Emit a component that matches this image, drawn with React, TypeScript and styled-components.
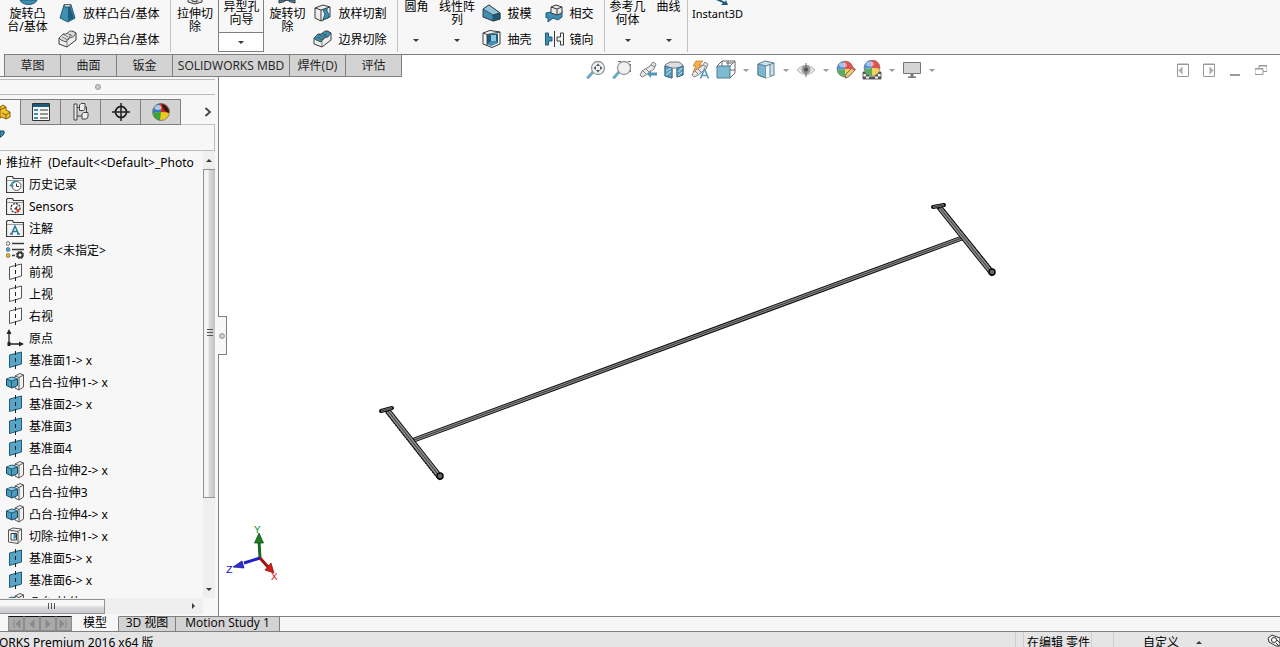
import React from "react";
import styled, { createGlobalStyle, css } from "styled-components";

const ink = "#3a3a3a";
const edge = "#808080";
const blue = "#3f8fb3";
const deep = "#1d5c7c";
const pale = "#8cc6de";

const GlobalStyle = createGlobalStyle`
  * { box-sizing: border-box; }
  body { margin: 0; }
  button, input {
    font: inherit; color: inherit; background: none; border: 0;
    padding: 0; margin: 0; border-radius: 0;
  }
  button { cursor: default; }
  svg { display: block; flex: none; }
`;

const Shell = styled.div`
  display: flex;
  flex-direction: column;
  height: 100vh;
  overflow: hidden;
  background: #f7f7f7;
  color: #000;
  font: 12px/13px "Noto Sans", "Noto Sans CJK SC", sans-serif;
  white-space: nowrap;
`;

/* ---------- Ribbon ---------- */

const Ribbon = styled.div`
  display: flex;
  flex: none;
  height: 54px;
  overflow: hidden;
`;

const Group = styled.div`
  display: flex;
  height: 52px;
  border-right: 1px solid #c3c3c3;
  &:last-child { border-right: 0; }
`;

const BigButton = styled.button<{ $width: number; $small?: boolean }>`
  display: flex;
  flex-direction: column;
  align-items: center;
  width: ${(p) => p.$width}px;
  height: 52px;
  font-size: ${(p) => (p.$small ? 11 : 12)}px;
`;

const BigCaret = styled.span`
  margin-top: auto;
  padding-bottom: 10px;
`;

const SplitButton = styled.div`
  display: flex;
  flex-direction: column;
  width: 46px;
  height: 52px;
  border: 1px solid ${edge};
  border-top: 0;
`;

const SplitLabel = styled.button`
  height: 33px;
  padding-bottom: 7px;
  line-height: 13px;
  border-bottom: 1px solid ${edge};
`;

const SplitDrop = styled.button`
  display: grid;
  place-items: center;
  flex: 1;
  background: #fff;
`;

const SmallColumn = styled.div<{ $end: number }>`
  display: flex;
  flex-direction: column;
  padding: 0 ${(p) => p.$end}px 0 3px;
`;

const SmallButton = styled.button`
  display: flex;
  align-items: center;
  gap: 6px;
  height: 26px;
`;

const Caret = ({ color = ink, up = false }: { color?: string; up?: boolean }) => (
  <svg width="6" height="3" viewBox="0 0 6 3">
    <path d={up ? "M0 3L3 0L6 3Z" : "M0 0H6L3 3Z"} fill={color} />
  </svg>
);

interface BigProps {
  lines: string[];
  width: number;
  icon?: React.ReactNode;
  caret?: boolean;
  small?: boolean;
}

function Big({ lines, width, icon, caret, small }: BigProps) {
  return (
    <BigButton $width={width} $small={small}>
      {icon}
      {lines.map((l) => <span key={l}>{l}</span>)}
      {caret && <BigCaret><Caret /></BigCaret>}
    </BigButton>
  );
}

const TopIcon = ({ kind }: { kind: "revolve" | "extrude" | "cut" | "instant" }) => (
  <svg width="24" height="7" viewBox="0 0 24 7">
    {kind === "revolve" && <path d="M4 0C6 6 19 6 21 0Z" fill={blue} stroke={deep} />}
    {kind === "extrude" && <path d="M5 0V2L12 4L19 2V0M9 0V1L14 2V0" fill="#ddd" stroke={ink} />}
    {kind === "cut" && <path d="M4 0V3L8 2L12 0L16 2L20 3V0Z" fill={blue} stroke={ink} />}
    {kind === "instant" && <path d="M10 0L15 0L19 2L20 0L22 5L15 5L17 3Z" fill={deep} />}
  </svg>
);

const Loft = () => (
  <svg width="19" height="20" viewBox="0 0 19 20">
    <path d="M6 2H13L17 15L10 19L2 15Z" fill={blue} stroke={deep} />
    <path d="M10 4L12 4L16 15L10 18Z" fill={deep} />
    <path d="M6 1.500H13L12 4H7Z" fill="#b9dcea" stroke={ink} strokeWidth=".7" />
  </svg>
);
const Boundary = ({ fill }: { fill: string }) => (
  <svg width="19" height="20" viewBox="0 0 19 20">
    <path d="M1 9L3 8L6 9L8 7L12 5L14 2L18 4V11L9 18L1 15Z" fill="#eee" stroke={ink} />
    <path d="M1 9L5 5L8 5L12 2L14 2L18 4L15 8L11 9L8 13L3 11Z" fill={fill} stroke={ink} strokeWidth=".8" />
    <path d="M9 18V12M5 5L10 8M9 4L14 7M4 8L10 11L13 5" fill="none" stroke={ink} strokeWidth=".6" />
  </svg>
);
const LoftCut = () => (
  <svg width="19" height="20" viewBox="0 0 19 20">
    <path d="M2 5L10 2L17 4V14L8 18L2 15Z" fill="#eee" stroke={ink} />
    <path d="M2 5L8 7V18M8 7L17 4" fill="none" stroke={ink} />
    <path d="M10 7L14 5V8L16 12V14L10 17L12 11Z" fill={blue} stroke={deep} />
  </svg>
);
const Draft = () => (
  <svg width="19" height="20" viewBox="0 0 19 20">
    <path d="M1 6L7 2L18 10V16L11 18L1 14Z" fill={blue} stroke={ink} />
    <path d="M1 6L7 2L18 10L11 12Z" fill={pale} stroke={ink} strokeWidth=".8" />
    <path d="M11 12V18L18 16V10Z" fill={deep} stroke={ink} strokeWidth=".7" />
  </svg>
);
const ShellIcon = () => (
  <svg width="19" height="20" viewBox="0 0 19 20">
    <path d="M1 4L8 1.500L18 3V15L10 18.500L1 15Z" fill="#f4f4f4" stroke={ink} />
    <path d="M5 5.500L16 4.500V14L9 16.500L5 15Z" fill={deep} />
    <path d="M9 6H14V12H9Z" fill={pale} />
    <path d="M5 15L9 12H15V14.500L9 17Z" fill={blue} />
    <path d="M1 4L5 5.500V16.500M5 5.500L18 3" fill="none" stroke={ink} strokeWidth=".9" />
  </svg>
);
const Intersect = () => (
  <svg width="19" height="20" viewBox="0 0 19 20">
    <path d="M1 10L6 9L13 11L17 8V14L13 17L8 15L3 19V14L1 15Z" fill={blue} stroke={deep} />
    <path d="M6 4L11 2L17 4V10L12 12L6 10Z" fill="#e8e8e8" stroke={ink} />
    <path d="M6 4L12 6L17 4M12 6V12" fill="none" stroke={ink} />
  </svg>
);
const Mirror = () => (
  <svg width="19" height="20" viewBox="0 0 19 20">
    <path d="M.5 4H3.500V8H7V12H3.500V16H.5Z" fill={blue} stroke={deep} />
    <path d="M9.500 2V18" stroke={ink} />
    <path d="M18.500 4H15.500V8H12V12H15.500V16H18.500Z" fill="#f4f4f4" stroke={ink} />
  </svg>
);

/* ---------- Command tabs and view toolbar ---------- */

const TabRow = styled.div`
  display: flex;
  flex: none;
  height: 23px;
  position: relative;
  z-index: 1;
`;

const CommandTabs = styled.div`
  display: flex;
  padding-left: 4px;
  border-bottom: 1px solid ${edge};
  font-family: "Open Sans", "Noto Sans CJK SC", sans-serif;
`;

const CommandTab = styled.button<{ $wide?: boolean }>`
  width: ${(p) => (p.$wide ? 117 : 56)}px;
  border: 1px solid ${edge};
  border-width: 1px 0 0 1px;
  background: #d3d3d3;
  color: #222;
  &:last-child { width: 57px; border-right-width: 1px; }
`;

const ViewBar = styled.div`
  display: flex;
  flex: 1;
  justify-content: space-between;
  padding: 0 6px 0 181px;
  border-top: 1px solid ${edge};
  background: #fff;
`;

const Tools = styled.div`
  display: flex;
`;

const Tool = styled.button<{ $narrow?: boolean }>`
  display: grid;
  place-items: center;
  width: ${(p) => (p.$narrow ? 14 : 26)}px;
  height: 30px;
`;

type HudKind = "fit" | "area" | "prev" | "section" | "anno" | "orient" | "style" | "eye" | "appear" | "scene" | "screen";

const Scope = () => (
  <>
    <path d="M2 15L4 11L12 6L15 2L18 4L16 9L8 15L4 17Z" fill="#e8e8e8" stroke="#808080" />
    <path d="M5 11L8 14M8 9L11 12M13 5L17 7" stroke="#808080" fill="none" />
  </>
);
const Ball = ({ cx, cy }: { cx: number; cy: number }) => (
  <g transform={`translate(${cx} ${cy})`}>
    <path d="M0 0L-8 1A8 8 0 0 1 -1 -8Z" fill="#5690d8" />
    <path d="M0 0L-1 -8A8 8 0 0 1 8 1Z" fill="#e05252" />
    <path d="M0 0L8 1A8 8 0 0 1 0 8Z" fill="#efd257" />
    <path d="M0 0L0 8A8 8 0 0 1 -8 1Z" fill="#58ae5c" />
    <circle r="8" fill="none" stroke="#777" strokeWidth=".6" />
    <ellipse cx="-2" cy="-4" rx="4" ry="2.500" fill="#fff" opacity=".45" />
  </g>
);

function HudIcon({ kind }: { kind: HudKind }) {
  return (
    <svg width="20" height="20" viewBox="0 0 20 20">
      {(kind === "fit" || kind === "area") && (
        <>
          {kind === "area" && <path d="M6 1.500H18.500V13" fill="none" stroke="#666" strokeDasharray="3 2" />}
          <path d="M7 12L2 17.500" stroke="#6fa8c2" strokeWidth="3" strokeLinecap="round" />
          <circle cx="12" cy="8" r="6.500" fill="#eef2f4" stroke="#999" strokeWidth="1.300" />
          {kind === "fit" && <path d="M12 3.500L14 6H10ZM12 12.500L14 10H10ZM7.500 8L10 6V10ZM16.500 8L14 6V10Z" fill="#555" />}
        </>
      )}
      {kind === "prev" && (
        <>
          <Scope />
          <path d="M9 14L13 10V12.500H19V15.500H13V18Z" fill="#5495b5" />
        </>
      )}
      {kind === "section" && (
        <>
          <path d="M1 5L6 2H15L19 5V15L13 17V8H8V18L1 16Z" fill="#ddd" stroke="#777" />
          <path d="M1 6L8 8V18L1 16ZM13 8L19 6V15L13 17Z" fill="#5c9fbe" stroke="#39708b" />
          <path d="M2 11L7 8M2 15L7 11M14 12L18 8M14 16L18 12" stroke="#c5e2ee" />
        </>
      )}
      {kind === "anno" && (
        <>
          <Scope />
          <path d="M6 1H13L9 5H12L3 12L6 6H3Z" fill="#f3b54a" stroke="#c87a3a" strokeWidth=".8" />
          <path d="M10.500 18.500L14.500 9L18.500 18.500M12 15.500H17" fill="none" stroke="#5c9ab8" strokeWidth="1.600" />
        </>
      )}
      {kind === "orient" && (
        <>
          <path d="M1 6L6 1H19V13L14 18M6 1V6M12 1V6M14 6L19 1M14 10H19M10 3H17" fill="none" stroke="#666" />
          <path d="M1 6H14V18H1Z" fill="#7fb9d2" stroke="#4c7f98" />
        </>
      )}
      {kind === "style" && (
        <>
          <path d="M2 4L9 1L18 3V15L10 18L2 15Z" fill="#c8e3ee" stroke="#5e7f8e" />
          <path d="M2 4L10 6V18L2 15Z" fill="#7db6cf" stroke="#5e7f8e" />
          <path d="M10 6L14 5V17L10 18Z" fill="#f0f7fa" />
          <path d="M10 6L18 3M14 4.500V16.500" stroke="#5e7f8e" />
        </>
      )}
      {kind === "eye" && (
        <>
          <path d="M1 10C6 4 14 4 19 10C14 16 6 16 1 10Z" fill="#e4e4e4" stroke="#b5b5b5" />
          <circle cx="10" cy="9.500" r="4.500" fill="#999" />
          <circle cx="10" cy="9.500" r="2" fill="#444" />
          <path d="M10 3V17" stroke="#666" />
        </>
      )}
      {kind === "appear" && (
        <>
          <Ball cx={9} cy={9} />
          <path d="M9 18L10 14L17 7L19.500 9.500L12.500 17Z" fill="#f0c96a" stroke="#555" strokeWidth=".8" />
          <path d="M15.500 8.500L17 7L19.500 9.500L18 11Z" fill="#d86a5c" />
        </>
      )}
      {kind === "scene" && (
        <>
          <path d="M1 12H19V19H1Z" fill="#eee" stroke="#666" />
          <path d="M1 12H4V14H1ZM16 12H19V14H16ZM4 14H7V16.500H4ZM13 14H16V16.500H13ZM1 16.500H4V19H1ZM7 16.500H10V19H7ZM13 16.500H10V19H13ZM16 16.500H19V19H16Z" fill="#555" />
          <Ball cx={10} cy={8} />
        </>
      )}
      {kind === "screen" && (
        <>
          <path d="M1.500 2.500H18.500V13.500H1.500Z" fill="#d4d4d4" stroke="#777" />
          <path d="M8.500 14V16.500H6V18H14V16.500H11.500V14Z" fill="#777" />
        </>
      )}
    </svg>
  );
}

const hud: [HudKind, string, boolean?][] = [
  ["fit", "整屏显示全图"], ["area", "局部放大"], ["prev", "上一视图"], ["section", "剖面视图"],
  ["anno", "动态注解视图"], ["orient", "视图定向", true], ["style", "显示样式", true], ["eye", "隐藏/显示项目", true],
  ["appear", "编辑外观"], ["scene", "应用布景", true], ["screen", "视图设定", true],
];

const windowGlyphs: [string, string][] = [
  ["左侧窗格", "M.5 1H11.500V13.500H.5ZM.5 1.500H11.500M5 4V11M4 5V10M3 6V9M2 7V8"],
  ["右侧窗格", "M.5 1H11.500V13.500H.5ZM.5 1.500H11.500M7 4V11M8 5V10M9 6V9M10 7V8"],
  ["最小化", "M1 11.500H11M1 12.500H11"],
  ["还原", "M0 5.500H8V11.500H0ZM0 6H8M4 5V2.500H12V8.500H8M4 3H12"],
];

/* ---------- Feature manager ---------- */

const Workspace = styled.div`
  display: flex;
  flex: 1;
  min-height: 0;
`;

const Sidebar = styled.aside`
  display: flex;
  flex-direction: column;
  flex: none;
  width: 219px;
  padding: 2px 3px 2px 0;
  border-right: 1px solid ${edge};
`;

const Grip = styled.div`
  display: grid;
  place-items: center;
  flex: none;
  height: 16px;
  padding-right: 20px;
  margin-bottom: 4px;
  border: 1px solid #bcbcbc;
  border-width: 1px 0;
`;

const Dot = styled.span`
  width: 6px;
  height: 6px;
  border: 1px solid #999;
  border-radius: 50%;
  background: #ccc;
`;

const PanelTabs = styled.div`
  display: flex;
  flex: none;
  height: 26px;
`;

const PanelTab = styled.button<{ $active?: boolean }>`
  display: grid;
  place-items: center;
  width: 40px;
  border: 1px solid ${edge};
  border-left: 0;
  background: #d3d3d3;
  ${(p) => p.$active && css`
    width: 21px;
    border-color: ${edge} ${edge} transparent;
    background: #f7f7f7;
    justify-content: start;
  `}
`;

const MoreTabs = styled.button`
  display: grid;
  flex: 1;
  place-items: center end;
  padding-right: 3px;
  border-bottom: 1px solid #c3c3c3;
`;

const FilterRow = styled.label`
  display: flex;
  align-items: center;
  flex: none;
  height: 26px;
  border: 1px solid #bcbcbc;
  border-width: 0 1px 1px 0;
  input { flex: 1; min-width: 0; outline: 0; }
`;

const TreeArea = styled.div`
  display: grid;
  grid-template-columns: minmax(0, 1fr) 12px;
  grid-template-rows: minmax(0, 1fr) 16px;
  flex: 1;
  min-height: 0;
`;

const Tree = styled.ul`
  margin: 0;
  padding: 0;
  list-style: none;
  overflow: hidden;
`;

const TreeItem = styled.li<{ $root?: boolean }>`
  display: flex;
  align-items: center;
  gap: ${(p) => (p.$root ? 4 : 5)}px;
  height: 22px;
  padding-left: ${(p) => (p.$root ? 0 : 6)}px;
  white-space: pre;
`;

const VScroll = styled.div`
  display: flex;
  flex-direction: column;
  align-items: center;
  background: #efefef;
`;

const ScrollArrow = styled.button`
  display: grid;
  place-items: center;
  flex: none;
  width: 12px;
  height: 18px;
`;

const VTrack = styled.div`
  flex: 1;
  width: 100%;
`;

const VThumb = styled.div`
  display: grid;
  place-items: center;
  height: 80%;
  border: 1px solid #929292;
  border-right: 0;
  background: linear-gradient(90deg, #f3f3f3 0 35%, #dadadd 50%, #c2c2c6);
`;

const HScroll = styled.div`
  display: flex;
  align-items: center;
  justify-content: space-between;
  padding-right: 4px;
  background: #efefef;
`;

const HThumb = styled.div`
  display: grid;
  place-items: center;
  width: 53%;
  height: 15px;
  border: 1px solid #929292;
  border-left: 0;
  background: linear-gradient(#f6f6f6 0 40%, #dcdcdf 55%, #cacace);
`;

type TreeKind = "history" | "sensor" | "note" | "material" | "ref" | "origin" | "plane" | "boss" | "cut";

const tree: [TreeKind, string][] = [
  ["history", "历史记录"], ["sensor", "Sensors"], ["note", "注解"], ["material", "材质 <未指定>"],
  ["ref", "前视"], ["ref", "上视"], ["ref", "右视"], ["origin", "原点"],
  ["plane", "基准面1-> x"], ["boss", "凸台-拉伸1-> x"], ["plane", "基准面2-> x"], ["plane", "基准面3"],
  ["plane", "基准面4"], ["boss", "凸台-拉伸2-> x"], ["boss", "凸台-拉伸3"], ["boss", "凸台-拉伸4-> x"],
  ["cut", "切除-拉伸1-> x"], ["plane", "基准面5-> x"], ["plane", "基准面6-> x"], ["boss", "凸台-拉伸5"],
];

function TreeIcon({ kind }: { kind: TreeKind }) {
  const folder = kind === "history" || kind === "sensor" || kind === "note";
  return (
    <svg width="18" height="18" viewBox="0 0 18 18">
      {folder && <path d="M.5 17.500V2.500L1.500 1.500H6.500L7.500 3.500H17.500V17.500Z" fill="#f4f4f4" stroke={ink} strokeWidth="1.200" />}
      {folder && <path d="M1 5.500H17" stroke="#999" />}
      {kind === "history" && (
        <>
          <circle cx="10.500" cy="11" r="4.500" fill="#fff" stroke="#555" />
          <path d="M10.500 8.500V11.500H13" fill="none" stroke={ink} />
          <path d="M3 11L6 8L8 12Z" fill={blue} />
          <path d="M5.500 10C6 7 9 5.500 12 6.500" fill="none" stroke={blue} strokeWidth="1.500" />
        </>
      )}
      {kind === "sensor" && (
        <>
          <circle cx="9.500" cy="11" r="4.500" fill="#fff" stroke="#333" strokeDasharray="2 1" strokeWidth="1.300" />
          <path d="M8 12L12 8L10.500 13Z" fill={ink} />
          <path d="M10 12H14.500L11 16Z" fill="#e23b22" />
        </>
      )}
      {kind === "note" && <path d="M5.500 15L9 7L12.500 15M7 12.500H11.500M4 15H7M11 15H14" fill="none" stroke="#2b7896" strokeWidth="1.500" />}
      {kind === "material" && (
        <>
          <circle cx="2" cy="2.500" r="1.800" fill="#fff" stroke={ink} strokeWidth=".8" />
          <circle cx="2" cy="8.500" r="2" fill="#4fa7d3" stroke={ink} strokeWidth=".5" />
          <circle cx="2" cy="14.500" r="2" fill="#e8b51c" stroke={ink} strokeWidth=".5" />
          <path d="M6 2.500H18M6 8.500H18M6 14.500H9" stroke={ink} strokeWidth="1.300" />
          <circle cx="14" cy="14" r="2.500" fill="#fff" stroke={ink} strokeWidth="2" />
          <circle cx="14" cy="14" r="3.800" fill="none" stroke={ink} strokeDasharray="1.500 1.500" />
        </>
      )}
      {(kind === "ref" || kind === "plane") && (
        <>
          <path
            d="M3.500 4L15.500 1V13L3.500 16.500Z"
            fill={kind === "plane" ? "#56a5c6" : "#fbfbfb"}
            stroke={kind === "plane" ? deep : "#555"}
          />
          <path d="M9.500 0V18" stroke="#222" strokeDasharray="4 3" />
        </>
      )}
      {kind === "origin" && (
        <>
          <path d="M3 16V5M2 15H13" stroke="#222" strokeWidth="1.300" />
          <path d="M.5 5L3 0L5.500 5ZM13 12.500L18 15L13 17.500ZM1.500 13H4.500V17H1.500Z" fill="#222" />
        </>
      )}
      {kind === "boss" && (
        <>
          <path d="M9 3L14 .5L17.500 2V14L13 17L9 15Z" fill="#f2f2f2" stroke="#555" />
          <path d="M13 4.500V17M13 4.500L17.500 2M13 4.500L9 3" fill="none" stroke="#555" />
          <path d="M.5 6L6 4L11.500 6V12.500L6 15L.5 12.500Z" fill="#4c9bbd" stroke="#134a66" />
          <path d="M1 6L6 4.500L11 6L5.500 7.500Z" fill={pale} />
          <path d="M.5 6L5.500 8L11.500 6M5.500 8V15" fill="none" stroke="#134a66" strokeWidth=".8" />
        </>
      )}
      {kind === "cut" && (
        <>
          <path d="M2.500 3L7 1L15.500 2V13L12 16.500L2.500 15Z" fill="#f2f2f2" stroke="#555" />
          <path d="M2.500 3L12 4.500V16.500M12 4.500L15.500 2" fill="none" stroke="#555" />
          <path d="M5 6.500H10.500V13H5Z" fill="#fff" stroke={ink} />
          <path d="M7.500 7H10V11L7.500 12.500Z" fill={blue} />
        </>
      )}
    </svg>
  );
}

/* ---------- Graphics area ---------- */

const Viewport = styled.main`
  position: relative;
  flex: 1;
  min-width: 0;
  background: #fff;
`;

const Scene = styled.svg`
  width: 100%;
  height: 100%;
`;

const Triad = styled.svg`
  position: absolute;
  left: 1px;
  bottom: 26px;
  font: 11px "Liberation Mono", monospace;
`;

const PanelHandle = styled.button`
  position: absolute;
  left: -1px;
  top: 239px;
  display: grid;
  place-items: center;
  width: 9px;
  height: 39px;
  border: 1px solid ${edge};
  border-left: 0;
  background: #f7f7f7;
`;

const Bar = ({ d, w }: { d: string; w: number }) => (
  <>
    <path d={d} stroke="#0c0c0c" strokeWidth={w} strokeLinecap="round" />
    <path d={d} stroke="#8c8c8c" strokeWidth={w - 2} />
    <path d={d} stroke="#3c3c3c" strokeWidth="1" />
  </>
);

/* ---------- Bottom ---------- */

const ModelTabs = styled.div`
  display: flex;
  flex: none;
  height: 16px;
  padding-left: 8px;
  border-bottom: 1px solid ${edge};
  font-family: "Open Sans", "Noto Sans CJK SC", sans-serif;
`;

const NavButton = styled.button`
  display: grid;
  place-items: center;
  width: 16px;
  border: 1px solid #8c8c8c;
  border-top-color: #111;
  background: #a9a9a9;
`;

const ModelTab = styled.button<{ $width: number; $active?: boolean }>`
  width: ${(p) => p.$width}px;
  padding-bottom: 2px;
  line-height: 12px;
  border: 1px solid ${edge};
  border-width: 1px 1px 0 0;
  background: #d3d3d3;
  ${(p) => p.$active && css`
    border-top-color: transparent;
    background: #f7f7f7;
  `}
`;

const TabFill = styled.div`
  flex: 1;
  border-top: 1px solid ${edge};
`;

const StatusBar = styled.footer`
  display: flex;
  flex: none;
  height: 15px;
  overflow: hidden;
  background: #e5e5e5;
  line-height: 21px;
`;

const Product = styled.span`
  flex: 1;
  margin-left: -1px;
`;

const StatusCell = styled.span<{ $width: number }>`
  width: ${(p) => p.$width}px;
  padding-left: 3px;
  border-left: 1px solid #cfcfcf;
`;

const UnitButton = styled.button`
  display: flex;
  align-items: center;
  gap: 17px;
  height: 21px;
  padding-left: 26px;
`;

export default function App() {
  return (
    <Shell>
      <GlobalStyle />
      <Ribbon>
        <Group>
          <Big width={55} icon={<TopIcon kind="revolve" />} lines={["旋转凸", "台/基体"]} />
          <SmallColumn $end={11}>
            <SmallButton><Loft />放样凸台/基体</SmallButton>
            <SmallButton><Boundary fill="#ddd" />边界凸台/基体</SmallButton>
          </SmallColumn>
        </Group>
        <Group>
          <Big width={47} icon={<TopIcon kind="extrude" />} lines={["拉伸切", "除"]} />
          <SplitButton>
            <SplitLabel>异型孔<br />向导</SplitLabel>
            <SplitDrop aria-label="异型孔向导选项"><Caret /></SplitDrop>
          </SplitButton>
          <Big width={46} icon={<TopIcon kind="cut" />} lines={["旋转切", "除"]} />
          <SmallColumn $end={11}>
            <SmallButton><LoftCut />放样切割</SmallButton>
            <SmallButton><Boundary fill={blue} />边界切除</SmallButton>
          </SmallColumn>
        </Group>
        <Group>
          <Big width={36} lines={["圆角"]} caret />
          <Big width={45} lines={["线性阵", "列"]} caret />
          <SmallColumn $end={10}>
            <SmallButton><Draft />拔模</SmallButton>
            <SmallButton><ShellIcon />抽壳</SmallButton>
          </SmallColumn>
          <SmallColumn $end={10}>
            <SmallButton><Intersect />相交</SmallButton>
            <SmallButton><Mirror />镜向</SmallButton>
          </SmallColumn>
        </Group>
        <Group>
          <Big width={46} lines={["参考几", "何体"]} caret />
          <Big width={36} lines={["曲线"]} caret />
        </Group>
        <Group>
          <Big width={60} small icon={<TopIcon kind="instant" />} lines={["Instant3D"]} />
        </Group>
      </Ribbon>

      <TabRow>
        <CommandTabs>
          <CommandTab>草图</CommandTab>
          <CommandTab>曲面</CommandTab>
          <CommandTab>钣金</CommandTab>
          <CommandTab $wide>SOLIDWORKS MBD</CommandTab>
          <CommandTab>焊件(D)</CommandTab>
          <CommandTab>评估</CommandTab>
        </CommandTabs>
        <ViewBar>
          <Tools>
            {hud.map(([kind, label, drop]) => (
              <React.Fragment key={kind}>
                <Tool aria-label={label}><HudIcon kind={kind} /></Tool>
                {drop && <Tool $narrow aria-label={label + "选项"}><Caret color="#999" /></Tool>}
              </React.Fragment>
            ))}
          </Tools>
          <Tools>
            {windowGlyphs.map(([label, d]) => (
              <Tool key={label} aria-label={label}>
                <svg width="12" height="14" viewBox="0 0 12 14"><path d={d} fill="none" stroke="#999" /></svg>
              </Tool>
            ))}
          </Tools>
        </ViewBar>
      </TabRow>

      <Workspace>
        <Sidebar>
          <Grip><Dot /></Grip>
          <PanelTabs>
            <PanelTab $active aria-label="设计树">
              <svg width="11" height="18" viewBox="0 0 11 18">
                <path d="M0 4L3 2L6 4V7L10 9V14L6 16L2 14L0 15Z" fill="#f2c230" stroke="#80600c" />
                <path d="M0 7L6 4M2 10L6 12L10 9M6 12V16" fill="none" stroke="#80600c" />
              </svg>
            </PanelTab>
            <PanelTab aria-label="属性">
              <svg width="18" height="18" viewBox="0 0 18 18">
                <path d="M.5 .5H17.500V17.500H.5Z" fill="#f6f6f6" stroke="#333" />
                <path d="M1 1H17V4H1Z" fill={deep} />
                <path d="M2 6H6V8H2ZM2 10H6V12H2ZM2 14H6V16H2Z" fill={blue} />
                <path d="M8 7H16M8 11H16M8 15H16" stroke="#333" />
              </svg>
            </PanelTab>
            <PanelTab aria-label="配置">
              <svg width="16" height="18" viewBox="0 0 16 18">
                <path d="M1 1H4V17H1ZM4 4.500H7M4 13H9" fill="#eee" stroke="#444" />
                <path d="M6.500 2L8 .5H12V6L10.500 7.500H6.500ZM9 11L10.500 9.500H15V14L13.500 16H9ZM12 4H13.500V9.500" fill="#eee" stroke="#444" />
              </svg>
            </PanelTab>
            <PanelTab aria-label="尺寸专家">
              <svg width="18" height="18" viewBox="0 0 18 18">
                <circle cx="9" cy="9" r="5.500" fill="none" stroke="#222" strokeWidth="1.800" />
                <path d="M9 0V18M0 9H18" stroke="#222" strokeWidth="1.500" />
              </svg>
            </PanelTab>
            <PanelTab aria-label="外观">
              <svg width="18" height="18" viewBox="0 0 18 18">
                <circle cx="9" cy="9" r="8.500" fill="#efc71e" />
                <path d="M9 9L1 10A8.500 8.500 0 0 1 8 .5Z" fill="#2f78c8" />
                <path d="M9 9L1 10A8.500 8.500 0 0 0 8 17.500Z" fill="#39a33c" />
                <path d="M9 9L8 .5A8.500 8.500 0 0 1 17.500 9.500Z" fill="#d9241c" />
                <path d="M10 1C14 2 17 6 17 10C13 9 10 5 10 1Z" fill="#222" />
                <ellipse cx="6" cy="4.500" rx="3.500" ry="2.500" fill="#fff" opacity=".6" />
                <circle cx="9" cy="9" r="8.500" fill="none" stroke="#555" strokeWidth=".6" />
              </svg>
            </PanelTab>
            <MoreTabs aria-label="更多">
              <svg width="8" height="10" viewBox="0 0 8 10"><path d="M1.500 1L6 5L1.500 9" fill="none" stroke="#444" strokeWidth="1.800" /></svg>
            </MoreTabs>
          </PanelTabs>
          <FilterRow>
            <svg width="5" height="18" viewBox="0 0 5 18"><path d="M0 2H4V5L1 8H0Z" fill={blue} stroke="#134a66" /></svg>
            <input type="text" aria-label="过滤" />
          </FilterRow>
          <TreeArea>
            <Tree>
              <TreeItem $root>
                <svg width="2" height="8" viewBox="0 0 2 8"><path d="M0 1H1V7H0Z" fill="#6b4a10" /></svg>
                {"推拉杆  (Default<<Default>_Photo"}
              </TreeItem>
              {tree.map(([kind, label]) => (
                <TreeItem key={label}><TreeIcon kind={kind} />{label}</TreeItem>
              ))}
            </Tree>
            <VScroll>
              <ScrollArrow aria-label="向上滚动"><Caret up /></ScrollArrow>
              <VTrack>
                <VThumb>
                  <svg width="6" height="8" viewBox="0 0 6 8"><path d="M0 .5H6M0 3.500H6M0 6.500H6" stroke="#555" /></svg>
                </VThumb>
              </VTrack>
              <ScrollArrow aria-label="向下滚动"><Caret /></ScrollArrow>
            </VScroll>
            <HScroll>
              <HThumb>
                <svg width="8" height="6" viewBox="0 0 8 6"><path d="M.5 0V6M3.500 0V6M6.500 0V6" stroke="#555" /></svg>
              </HThumb>
              <ScrollArrow aria-label="向右滚动">
                <svg width="3" height="6" viewBox="0 0 3 6"><path d="M0 0L3 3L0 6Z" fill={ink} /></svg>
              </ScrollArrow>
            </HScroll>
          </TreeArea>
        </Sidebar>

        <Viewport>
          <Scene viewBox="219 77 1061 539" fill="none">
            <Bar d="M414 440L962 238" w={5} />
            <Bar d="M388 411L440 477" w={6} />
            <Bar d="M940 208L992 273" w={6} />
            <path d="M386 413L437 478M942 207L994 271" stroke="#111" strokeDasharray="2 1" strokeWidth="1" />
            <Bar d="M381 411L392 408" w={4} />
            <Bar d="M933 207L944 205" w={4} />
            <circle cx="440" cy="476" r="3" fill="#666" stroke="#0c0c0c" strokeWidth="1.500" />
            <circle cx="992" cy="272" r="3" fill="#666" stroke="#0c0c0c" strokeWidth="1.500" />
          </Scene>
          <Triad width="70" height="75" viewBox="0 0 70 75">
            <path d="M40 43L39 26" stroke="#1c6b1c" strokeWidth="3" />
            <path d="M34.500 28L39 18L43.500 28Z" fill="#1f7d1f" stroke="#0d430d" strokeWidth=".7" />
            <path d="M40 43L24 48" stroke="#2020c8" strokeWidth="3" />
            <path d="M13 52L22 46L24 53Z" fill="#2c2ce0" stroke="#12126e" strokeWidth=".7" />
            <path d="M40 43L48 52" stroke="#a01212" strokeWidth="3" />
            <path d="M45 55L51 48L54 58Z" fill="#d41c1c" stroke="#7a0c0c" strokeWidth=".7" />
            <text x="34" y="18" fill="#109010">Y</text>
            <text x="6" y="58" fill="#1010e0">Z</text>
            <text x="51" y="65" fill="#e01010">X</text>
          </Triad>
          <PanelHandle aria-label="折叠面板"><Dot /></PanelHandle>
        </Viewport>
      </Workspace>

      <ModelTabs>
        {["M3 1V9M9 1L5 5L9 9Z", "M7 1L3 5L7 9Z", "M3 1L7 5L3 9Z", "M7 1V9M1 1L5 5L1 9Z"].map((d) => (
          <NavButton key={d} aria-label="切换标签">
            <svg width="10" height="10" viewBox="0 0 10 10"><path d={d} fill="#8a8a8a" stroke="#8a8a8a" /></svg>
          </NavButton>
        ))}
        <ModelTab $width={47} $active>模型</ModelTab>
        <ModelTab $width={57}>3D 视图</ModelTab>
        <ModelTab $width={104}>Motion Study 1</ModelTab>
        <TabFill />
      </ModelTabs>
      <StatusBar>
        <Product>ORKS Premium 2016 x64 版</Product>
        <StatusCell $width={8} />
        <StatusCell $width={68}>在编辑 零件</StatusCell>
        <StatusCell $width={22} />
        <StatusCell $width={154}>
          <UnitButton>自定义<Caret up /></UnitButton>
        </StatusCell>
        <svg width="13" height="15" viewBox="0 0 13 15">
          <path d="M1 6L5 3L13 6V14H9L2 10Z" fill="#f0f0f0" stroke="#333" />
          <circle cx="7" cy="8" r="2.500" fill="#fff" stroke="#333" />
          <path d="M10 8L13 11M9 11L12 14" stroke="#333" />
        </svg>
      </StatusBar>
    </Shell>
  );
}
